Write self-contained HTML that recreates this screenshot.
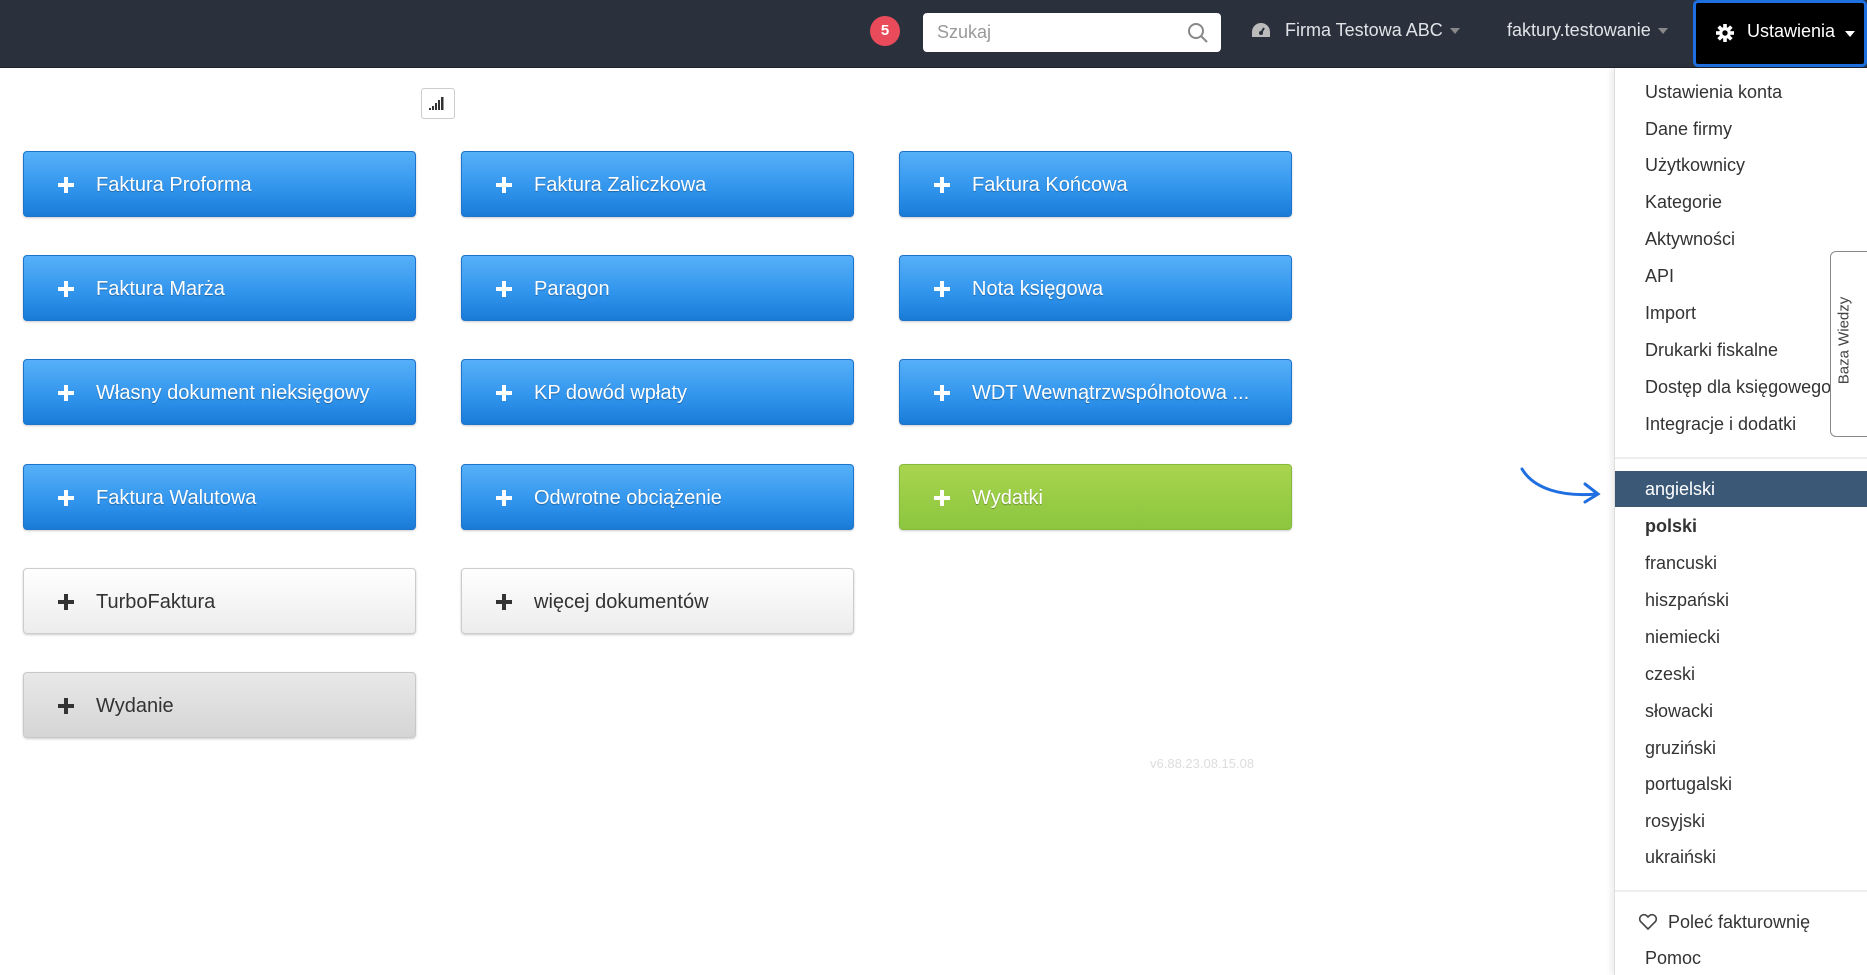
<!DOCTYPE html>
<html><head><meta charset="utf-8"><style>
*{box-sizing:border-box;margin:0;padding:0}
body{width:1867px;height:975px;overflow:hidden;background:#fff;font-family:"Liberation Sans",Arial,sans-serif;position:relative}
.top{position:absolute;left:0;top:0;width:1867px;height:68px;background:#2a313c;border-bottom:1px solid #1d232b}
.badge{position:absolute;left:870px;top:16px;width:30px;height:30px;border-radius:50%;background:#e94b5b;color:#fff;font-size:15px;font-weight:bold;text-align:center;line-height:30px}
.search{position:absolute;left:923px;top:13px;width:298px;height:39px;background:#fff;border-radius:4px;color:#999;font-size:18px;line-height:39px;padding-left:14px}
.navt{position:absolute;top:20px;color:#e0e3e7;font-size:18px}
.caret{display:inline-block;width:0;height:0;border-left:5px solid transparent;border-right:5px solid transparent;border-top:6px solid #888;margin-left:7px;vertical-align:middle}
.ust{position:absolute;left:1693px;top:0;width:174px;height:67px;background:#000;border:3px solid #1e6fe0;border-radius:5px;color:#fff;font-size:18px}
.btn{position:absolute;width:393px;height:66px;border-radius:4px;color:#fff;font-size:20px;line-height:66px;padding-left:72px;text-shadow:0 1px 1px rgba(0,0,0,.3);background:linear-gradient(#57b0f8,#2f93ec 60%,#1a7bd6);border:1px solid #1c74cc;box-shadow:0 1px 2px rgba(0,0,0,.2)}
.btn:before{content:"";position:absolute;left:34px;top:25px;width:16px;height:16px;background:linear-gradient(#fff,#fff) center/16px 4px no-repeat,linear-gradient(#fff,#fff) center/4px 16px no-repeat}
.g{background:linear-gradient(#a9d44f,#8cc63f);border-color:#86b93c}
.w{color:#333;text-shadow:none;background:linear-gradient(#fff,#ececec);border-color:#ccc}
.w:before,.d:before{background:linear-gradient(#333,#333) center/16px 4px no-repeat,linear-gradient(#333,#333) center/4px 16px no-repeat}
.d{color:#333;text-shadow:none;background:linear-gradient(#e8e8e8,#d5d5d5);border-color:#c8c8c8}
.menu{position:absolute;left:1614px;top:68px;width:253px;height:907px;background:#fff;border-left:1px solid #ddd;box-shadow:-3px 0 6px rgba(0,0,0,.08)}
.it{position:absolute;left:30px;color:#333;font-size:18px;line-height:22px}
.hr{position:absolute;left:0;width:253px;height:2px;background:#eee}
</style></head><body>
<div class="top">
<div class="badge">5</div>
<div class="search">Szukaj
<svg style="position:absolute;right:12px;top:9px" width="22" height="22" viewBox="0 0 22 22" fill="none" stroke="#888" stroke-width="2"><circle cx="9" cy="9" r="7"/><path d="M14 14l6 6"/></svg></div>
<svg style="position:absolute;left:1251px;top:22px" width="20" height="18" viewBox="0 0 20 18"><path d="M10 1a9 9 0 0 0-9 9v5h18v-5a9 9 0 0 0-9-9z" fill="#bbb"/><circle cx="10" cy="11" r="2" fill="#2a313c"/><path d="M10 11l3-5" stroke="#2a313c" stroke-width="2"/></svg>
<div class="navt" style="left:1285px">Firma Testowa ABC<span class="caret"></span></div>
<div class="navt" style="left:1507px">faktury.testowanie<span class="caret"></span></div>
<div class="ust"><svg style="position:absolute;left:20px;top:21px" width="18" height="18" viewBox="0 0 20 20"><g fill="#fff"><circle cx="10" cy="10" r="6.5"/><rect x="8" y="0" width="4" height="20"/><rect x="0" y="8" width="20" height="4"/><rect x="8" y="0" width="4" height="20" transform="rotate(45 10 10)"/><rect x="8" y="0" width="4" height="20" transform="rotate(-45 10 10)"/></g><circle cx="10" cy="10" r="3" fill="#000"/></svg><span style="position:absolute;left:51px;top:18px">Ustawienia</span><span class="caret" style="position:absolute;left:149px;top:28px;border-top-color:#fff;margin:0"></span></div>
</div>
<div style="position:absolute;left:421px;top:88px;width:34px;height:31px;border:1px solid #ccc;border-radius:3px;background:#fff"><svg style="position:absolute;left:7px;top:6px" width="18" height="16"><rect x="0" y="13" width="2" height="2" fill="#333"/><rect x="3" y="11" width="2" height="4" fill="#333"/><rect x="6" y="8" width="2" height="7" fill="#333"/><rect x="9" y="5" width="2" height="10" fill="#333"/><rect x="12" y="2" width="2.5" height="13" fill="#333"/></svg></div>
<div class="btn" style="left:23px;top:151px">Faktura Proforma</div>
<div class="btn" style="left:461px;top:151px">Faktura Zaliczkowa</div>
<div class="btn" style="left:899px;top:151px">Faktura Końcowa</div>
<div class="btn" style="left:23px;top:255px">Faktura Marża</div>
<div class="btn" style="left:461px;top:255px">Paragon</div>
<div class="btn" style="left:899px;top:255px">Nota księgowa</div>
<div class="btn" style="left:23px;top:359px">Własny dokument nieksięgowy</div>
<div class="btn" style="left:461px;top:359px">KP dowód wpłaty</div>
<div class="btn" style="left:899px;top:359px">WDT Wewnątrzwspólnotowa ...</div>
<div class="btn" style="left:23px;top:464px">Faktura Walutowa</div>
<div class="btn" style="left:461px;top:464px">Odwrotne obciążenie</div>
<div class="btn g" style="left:899px;top:464px">Wydatki</div>
<div class="btn w" style="left:23px;top:568px">TurboFaktura</div>
<div class="btn w" style="left:461px;top:568px">więcej dokumentów</div>
<div class="btn d" style="left:23px;top:672px">Wydanie</div>
<div style="position:absolute;left:1150px;top:756px;color:#ddd;font-size:13px">v6.88.23.08.15.08</div>
<svg style="position:absolute;left:1515px;top:462px" width="90" height="45" viewBox="0 0 90 45" fill="none" stroke="#1f6fe0" stroke-width="3" stroke-linecap="round"><path d="M7 7c12 20 40 28 75 25"/><path d="M70 22l13 10-13 8"/></svg>
<div class="menu">
<div class="it" style="top:13px">Ustawienia konta</div>
<div class="it" style="top:50px">Dane firmy</div>
<div class="it" style="top:86px">Użytkownicy</div>
<div class="it" style="top:123px">Kategorie</div>
<div class="it" style="top:160px">Aktywności</div>
<div class="it" style="top:197px">API</div>
<div class="it" style="top:234px">Import</div>
<div class="it" style="top:271px">Drukarki fiskalne</div>
<div class="it" style="top:308px">Dostęp dla księgowego</div>
<div class="it" style="top:345px">Integracje i dodatki</div>
<div class="hr" style="top:389px"></div>
<div style="position:absolute;left:0;top:403px;width:253px;height:36px;background:#3b5977"></div>
<div class="it" style="top:410px;color:#fff">angielski</div>
<div class="it" style="top:447px;font-weight:bold">polski</div>
<div class="it" style="top:484px">francuski</div>
<div class="it" style="top:521px">hiszpański</div>
<div class="it" style="top:558px">niemiecki</div>
<div class="it" style="top:595px">czeski</div>
<div class="it" style="top:632px">słowacki</div>
<div class="it" style="top:669px">gruziński</div>
<div class="it" style="top:705px">portugalski</div>
<div class="it" style="top:742px">rosyjski</div>
<div class="it" style="top:778px">ukraiński</div>
<div class="hr" style="top:822px"></div>
<svg style="position:absolute;left:23px;top:845px" width="20" height="18" viewBox="0 0 20 18" fill="none" stroke="#444" stroke-width="1.6"><path d="M10 16L2.5 8.5a4.3 4.3 0 0 1 6-6L10 4l1.5-1.5a4.3 4.3 0 0 1 6 6z"/></svg>
<div class="it" style="left:53px;top:843px">Poleć fakturownię</div>
<div class="it" style="top:879px">Pomoc</div>
</div>
<div style="position:absolute;left:1830px;top:251px;width:45px;height:186px;background:#fff;border:1px solid #888;border-radius:6px"><div style="position:absolute;left:-62px;top:80px;width:150px;transform:rotate(-90deg);font-size:15px;color:#444;text-align:center">Baza Wiedzy</div></div>
</body></html>
